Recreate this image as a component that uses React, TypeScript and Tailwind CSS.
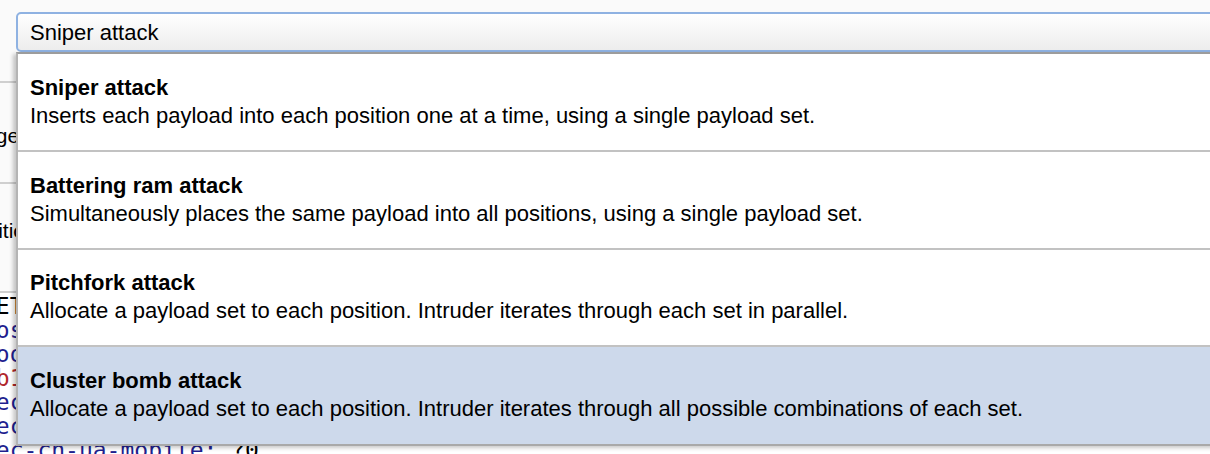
import React from 'react'

interface AttackOption {
  title: string
  description: string
  height: string
}

const options: AttackOption[] = [
  {
    title: 'Sniper attack',
    description: 'Inserts each payload into each position one at a time, using a single payload set.',
    height: 'h-[98px]',
  },
  {
    title: 'Battering ram attack',
    description: 'Simultaneously places the same payload into all positions, using a single payload set.',
    height: 'h-[97.5px]',
  },
  {
    title: 'Pitchfork attack',
    description: 'Allocate a payload set to each position. Intruder iterates through each set in parallel.',
    height: 'h-[97.5px]',
  },
  {
    title: 'Cluster bomb attack',
    description:
      'Allocate a payload set to each position. Intruder iterates through all possible combinations of each set.',
    height: 'h-[96.5px]',
  },
]

function RequestEditor() {
  // only a sliver of this shows left of the dropdown, plus the last row below it
  return (
    <div className="flex-1 min-h-0 overflow-hidden bg-white pt-[1px] font-['DejaVu_Sans_Mono',monospace] text-[23px] leading-[24px] whitespace-nowrap">
      <div className="ml-[-18px] text-black">GET /intruder/login HTTP/2</div>
      <div className="ml-[-18px]">
        <span className="text-[#1f1f8f]">Host:</span> <span className="text-black">example.com</span>
      </div>
      <div className="ml-[-18px]">
        <span className="text-[#1f1f8f]">Cookie:</span> <span className="text-black">session=</span>
      </div>
      <div className="ml-[-18px] text-[#b0262b]">0b1c7f2e9a4d6b3e8f1a2c5d</div>
      <div className="ml-[-18px]">
        <span className="text-[#1f1f8f]">Sec-Ch-Ua:</span> <span className="text-black">"Chromium"</span>
      </div>
      <div className="ml-[-18px]">
        <span className="text-[#1f1f8f]">Sec-Ch-Ua-Platform:</span> <span className="text-black">"macOS"</span>
      </div>
      <div className="ml-[-18px]">
        <span className="text-[#1f1f8f]">sec-ch-ua-mobile:</span> <span className="text-black">?0</span>
      </div>
    </div>
  )
}

function AttackTypeDropdown() {
  return (
    <div className="absolute left-[16px] top-[12px] w-[1220px]">
      <div className="h-[40px] rounded-l-[5px] border-2 border-[#8fb2e2] bg-gradient-to-b from-white to-[#ededed] pl-[12px] flex items-center text-[22px] text-black">
        Sniper attack
      </div>
      <div className="border-t-2 border-l-2 border-b-2 border-t-[#9c9c9c] border-l-[#b4b4b4] border-b-[#a9a9a9] bg-white shadow-[-3px_2px_4px_rgba(0,0,0,0.22)]">
        {options.map((opt, i) => (
          <div
            key={opt.title}
            className={`${opt.height} pl-[12px] flex flex-col justify-center text-[22px] leading-[28px] text-black ${
              i < options.length - 1 ? 'border-b-2 border-[#c2c2c2]' : ''
            } ${i === options.length - 1 ? 'bg-[#cdd9eb]' : ''}`}
          >
            <div className="font-bold">{opt.title}</div>
            <div>{opt.description}</div>
          </div>
        ))}
      </div>
    </div>
  )
}

export default function App() {
  return (
    <div className="relative w-[1210px] h-[454px] overflow-hidden bg-white font-['Liberation_Sans',Arial,sans-serif]">
      <div className="flex flex-col h-full">
        <div className="shrink-0 h-[83px] bg-[#fafafa] border-b-2 border-[#cfcfcf]" />
        <div className="shrink-0 h-[101px] bg-[#fafafa] border-b-2 border-[#cfcfcf] flex items-center pt-[7px] whitespace-nowrap text-[21px] text-black">
          <span className="ml-[-66px]">Message</span>
        </div>
        <div className="shrink-0 h-[109px] bg-[#fafafa] border-b-2 border-[#cfcfcf] flex items-center pb-[14px] whitespace-nowrap text-[21px] text-black">
          <span className="ml-[-38px]">Positions</span>
        </div>
        <RequestEditor />
      </div>
      <AttackTypeDropdown />
    </div>
  )
}
